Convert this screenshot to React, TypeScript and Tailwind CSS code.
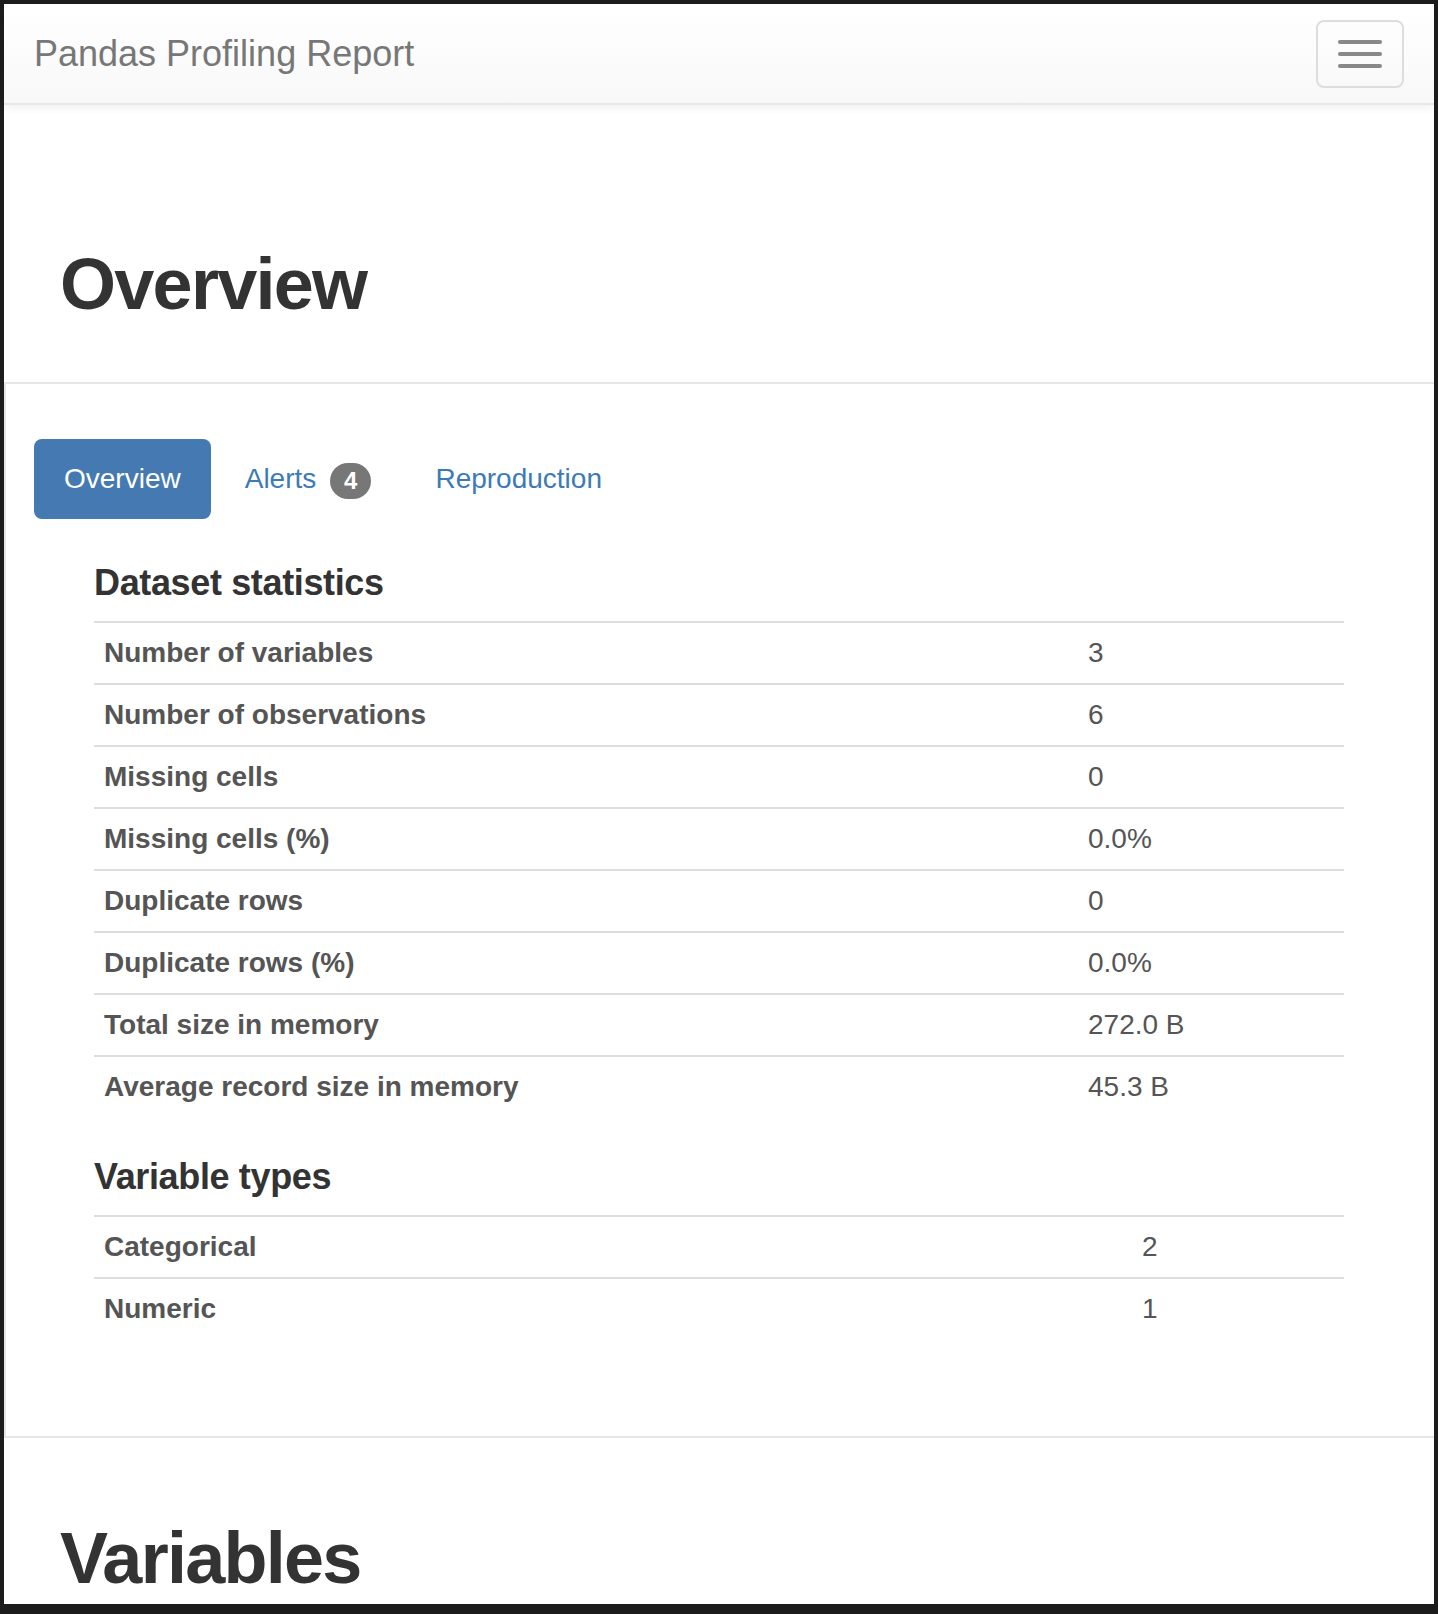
import React from 'react';

const datasetStats: [string, string][] = [
  ['Number of variables', '3'],
  ['Number of observations', '6'],
  ['Missing cells', '0'],
  ['Missing cells (%)', '0.0%'],
  ['Duplicate rows', '0'],
  ['Duplicate rows (%)', '0.0%'],
  ['Total size in memory', '272.0 B'],
  ['Average record size in memory', '45.3 B'],
];

const variableTypes: [string, string][] = [
  ['Categorical', '2'],
  ['Numeric', '1'],
];

const StatTable: React.FC<{ rows: [string, string][]; labelWidth: string }> = ({ rows, labelWidth }) => (
  <div className="w-[1250px]">
    {rows.map(([label, value]) => (
      <div key={label} className="flex border-t-2 border-[#dddddd]">
        <div className={`${labelWidth} shrink-0 px-[10px] py-[10px] text-[28px] leading-[40px] font-bold text-[#555555]`}>
          {label}
        </div>
        <div className="flex-1 px-[10px] py-[10px] text-[28px] leading-[40px] text-[#555555]">{value}</div>
      </div>
    ))}
  </div>
);

export default function App() {
  return (
    <div className="bg-[#1c1c1c] pt-[4px] pl-[4px] pr-[4px] pb-[10px] font-['Liberation_Sans',Arial,sans-serif]">
      <div className="h-[1600px] overflow-hidden bg-white">
        <nav className="flex h-[101px] items-start justify-between border-b-2 border-[#e7e7e7] bg-gradient-to-b from-white to-[#f8f8f8] px-[30px] shadow-[0_2px_10px_rgba(0,0,0,0.075)]">
          <span className="pt-[30px] text-[36px] leading-[40px] text-[#777777]">Pandas Profiling Report</span>
          <button className="mt-[16px] flex h-[68px] w-[88px] flex-col items-center justify-center gap-[8px] rounded-[8px] border-2 border-[#dddddd]">
            <span className="block h-[4px] w-[44px] rounded-[2px] bg-[#888888]" />
            <span className="block h-[4px] w-[44px] rounded-[2px] bg-[#888888]" />
            <span className="block h-[4px] w-[44px] rounded-[2px] bg-[#888888]" />
          </button>
        </nav>

        <h1 className="mt-[140px] mb-[58px] pl-[56px] text-[72px] leading-[79px] font-bold tracking-[-0.024em] text-[#333333]">
          Overview
        </h1>

        <section className="border-y-2 border-l-2 border-[#e6e6e6] pt-[55px] pb-[97px]">
          <ul className="flex gap-[4px] pl-[28px]">
            <li>
              <a className="block rounded-[8px] bg-[#4479b2] px-[30px] py-[20px] text-[28px] leading-[40px] text-white">
                Overview
              </a>
            </li>
            <li>
              <a className="block px-[30px] py-[20px] text-[28px] leading-[40px] text-[#3c7ab8]">
                Alerts{' '}
                <span className="ml-[6px] inline-block rounded-[20px] bg-[#777777] px-[14px] py-[6px] align-middle text-[24px] leading-[24px] font-bold text-white">
                  4
                </span>
              </a>
            </li>
            <li>
              <a className="block px-[30px] py-[20px] text-[28px] leading-[40px] text-[#3c7ab8]">Reproduction</a>
            </li>
          </ul>

          <div className="px-[88px]">
            <h4 className="mt-[44px] mb-[18px] text-[36px] leading-[40px] font-bold tracking-[-0.01em] text-[#333333]">
              Dataset statistics
            </h4>
            <StatTable rows={datasetStats} labelWidth="w-[984px]" />

            <h4 className="mt-[40px] mb-[18px] text-[36px] leading-[40px] font-bold tracking-[-0.01em] text-[#333333]">
              Variable types
            </h4>
            <StatTable rows={variableTypes} labelWidth="w-[1038px]" />
          </div>
        </section>

        <h1 className="mt-[81px] pl-[56px] text-[72px] leading-[79px] font-bold tracking-[-0.024em] text-[#333333]">
          Variables
        </h1>
      </div>
    </div>
  );
}
